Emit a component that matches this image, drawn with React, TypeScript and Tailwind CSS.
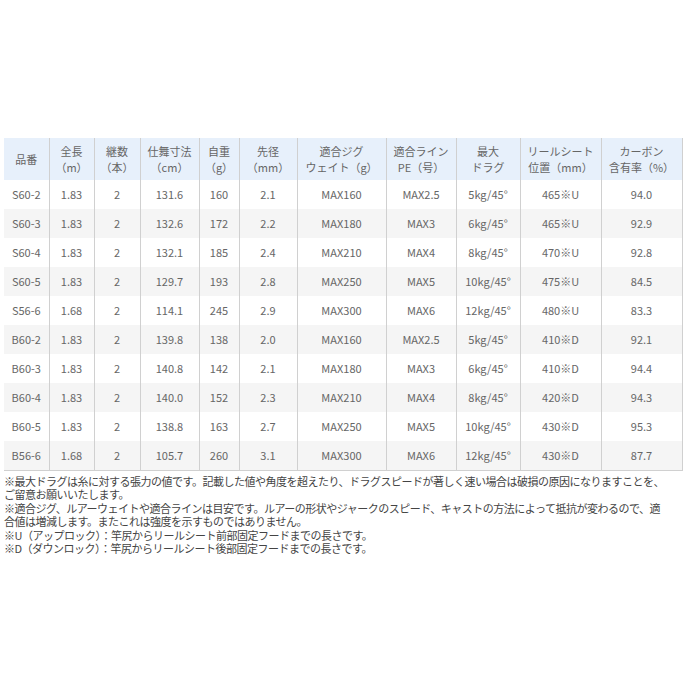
import React from "react";

type Row = string[];

const headers: [string, string?][] = [
  ["品番"],
  ["全長", "（m）"],
  ["継数", "（本）"],
  ["仕舞寸法", "（cm）"],
  ["自重", "（g）"],
  ["先径", "（mm）"],
  ["適合ジグ", "ウェイト（g）"],
  ["適合ライン", "PE（号）"],
  ["最大", "ドラグ"],
  ["リールシート", "位置（mm）"],
  ["カーボン", "含有率（%）"],
];

const widths = [45, 45, 46, 59, 40, 58, 89, 70, 64, 81, 81];

const rows: Row[] = [
  ["S60-2", "1.83", "2", "131.6", "160", "2.1", "MAX160", "MAX2.5", "5kg/45°", "465※U", "94.0"],
  ["S60-3", "1.83", "2", "132.6", "172", "2.2", "MAX180", "MAX3", "6kg/45°", "465※U", "92.9"],
  ["S60-4", "1.83", "2", "132.1", "185", "2.4", "MAX210", "MAX4", "8kg/45°", "470※U", "92.8"],
  ["S60-5", "1.83", "2", "129.7", "193", "2.8", "MAX250", "MAX5", "10kg/45°", "475※U", "84.5"],
  ["S56-6", "1.68", "2", "114.1", "245", "2.9", "MAX300", "MAX6", "12kg/45°", "480※U", "83.3"],
  ["B60-2", "1.83", "2", "139.8", "138", "2.0", "MAX160", "MAX2.5", "5kg/45°", "410※D", "92.1"],
  ["B60-3", "1.83", "2", "140.8", "142", "2.1", "MAX180", "MAX3", "6kg/45°", "410※D", "94.4"],
  ["B60-4", "1.83", "2", "140.0", "152", "2.3", "MAX210", "MAX4", "8kg/45°", "420※D", "94.3"],
  ["B60-5", "1.83", "2", "138.8", "163", "2.7", "MAX250", "MAX5", "10kg/45°", "430※D", "95.3"],
  ["B56-6", "1.68", "2", "105.7", "260", "3.1", "MAX300", "MAX6", "12kg/45°", "430※D", "87.7"],
];

const notes = [
  "※最大ドラグは糸に対する張力の値です。記載した値や角度を超えたり、ドラグスピードが著しく速い場合は破損の原因になりますことを、",
  "ご留意お願いいたします。",
  "※適合ジグ、ルアーウェイトや適合ラインは目安です。ルアーの形状やジャークのスピード、キャストの方法によって抵抗が変わるので、適",
  "合値は増減します。またこれは強度を示すものではありません。",
  "※U（アップロック）：竿尻からリールシート前部固定フードまでの長さです。",
  "※D（ダウンロック）：竿尻からリールシート後部固定フードまでの長さです。",
];

export default function App() {
  return (
    <div
      className="w-[689px] h-[689px] bg-white overflow-hidden"
      style={{ fontFamily: "'Noto Sans CJK JP', 'Noto Sans', sans-serif" }}
    >
      <div className="pt-[138px] pl-[4px]">
        <table className="table-fixed border-collapse w-[678px] text-[11px] text-[#666]">
          <colgroup>
            {widths.map((w, i) => (
              <col key={i} style={{ width: w }} />
            ))}
          </colgroup>
          <thead>
            <tr className="bg-[#e7f0fb] h-[42px]">
              {headers.map(([a, b], i) => (
                <th
                  key={i}
                  className={`font-normal text-center align-middle leading-[16px] p-0 ${
                    i > 0 ? "border-l border-[#d0d0d0]" : ""
                  } ${i === headers.length - 1 ? "border-r border-[#d0d0d0]" : ""}`}
                >
                  <div>{a}</div>
                  {b && <div>{b}</div>}
                </th>
              ))}
            </tr>
          </thead>
          <tbody>
            {rows.map((r, ri) => (
              <tr
                key={ri}
                className={`h-[29px] ${ri % 2 === 1 ? "bg-[#f5f5f5]" : "bg-white"} ${
                  ri === rows.length - 1 ? "border-b border-[#d0d0d0]" : ""
                }`}
              >
                {r.map((c, ci) => (
                  <td
                    key={ci}
                    className={`text-center align-middle p-0 whitespace-nowrap ${
                      ci > 0 ? "border-l border-[#d0d0d0]" : ""
                    } ${ci === r.length - 1 ? "border-r border-[#d0d0d0]" : ""}`}
                  >
                    {c}
                  </td>
                ))}
              </tr>
            ))}
          </tbody>
        </table>
        <div className="mt-[4px] text-[11px] leading-[13.6px] text-[#444] tracking-[-0.5px]">
          {notes.map((n, i) => (
            <div key={i} className="whitespace-nowrap">
              {n}
            </div>
          ))}
        </div>
      </div>
    </div>
  );
}
